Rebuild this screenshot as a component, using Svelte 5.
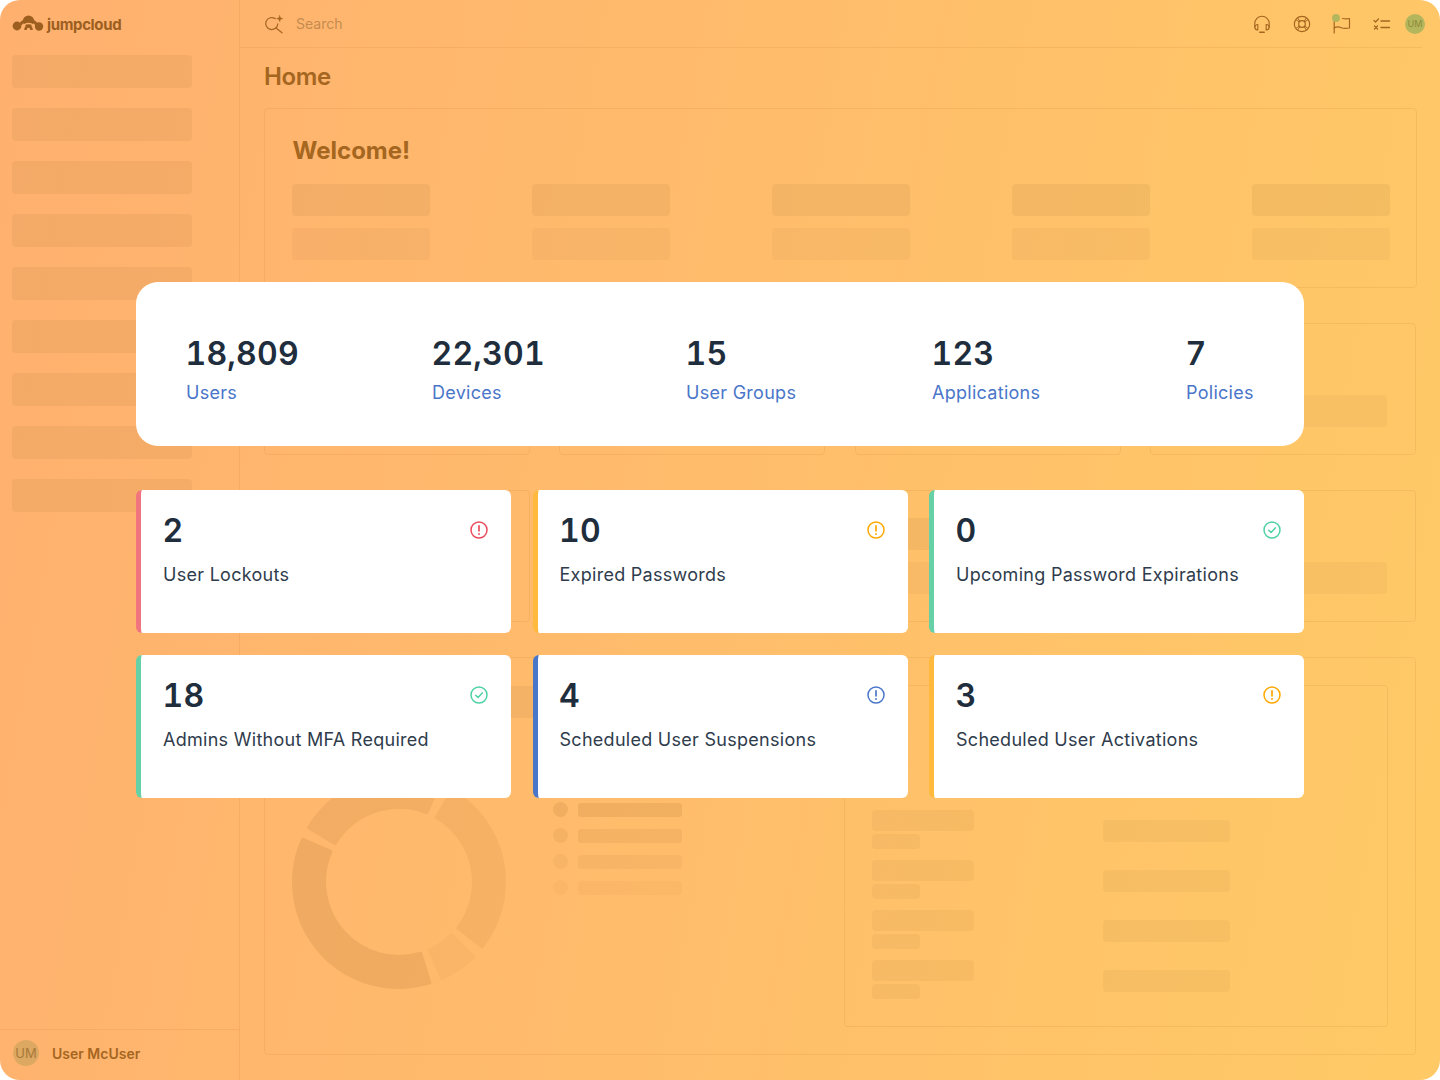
<script>
  const stats = [
    { value: "18,809", label: "Users" },
    { value: "22,301", label: "Devices" },
    { value: "15", label: "User Groups" },
    { value: "123", label: "Applications" },
    { value: "7", label: "Policies" }
  ];

  const alerts = [
    { value: 2, label: "User Lockouts", tone: "red", icon: "alert" },
    { value: 10, label: "Expired Passwords", tone: "amber", icon: "alert" },
    { value: 0, label: "Upcoming Password Expirations", tone: "green", icon: "check" },
    { value: 18, label: "Admins Without MFA Required", tone: "green", icon: "check" },
    { value: 4, label: "Scheduled User Suspensions", tone: "blue", icon: "alert" },
    { value: 3, label: "Scheduled User Activations", tone: "amber", icon: "alert" }
  ];

  const navItems = Array.from({ length: 9 });
  const welcomeCols = Array.from({ length: 5 });
  const summaryPanels = Array.from({ length: 8 });
  const legendLevels = ["l1", "l2", "l3", "l4"];
  const rows = Array.from({ length: 4 });

  const segments = [
    { from: 163, to: 294, level: "l1" },
    { from: 301, to: 382, level: "l2" },
    { from: 390, to: 488, level: "l3" },
    { from: 495, to: 516, level: "l4" }
  ];

  function point(r, deg) {
    const a = (deg * Math.PI) / 180;
    return `${(107 + r * Math.sin(a)).toFixed(2)} ${(107 - r * Math.cos(a)).toFixed(2)}`;
  }

  function arc(from, to) {
    const big = to - from > 180 ? 1 : 0;
    const outer = 105.5;
    const inner = 74.5;
    return `M${point(outer, from)}A${outer} ${outer} 0 ${big} 1 ${point(outer, to)}L${point(inner, to)}A${inner} ${inner} 0 ${big} 0 ${point(inner, from)}Z`;
  }
</script>

<div class="frame">
  <aside class="sidebar">
    <div class="logo">
      <svg width="32" height="20" viewBox="0 0 32 20" fill="none">
        <circle cx="5" cy="11" r="4.4" fill="#9c5f1f" />
        <circle cx="27" cy="11.5" r="4.2" fill="#9c5f1f" />
        <circle cx="16.5" cy="6" r="5.6" fill="#9c5f1f" />
        <path d="M8.5 9.5c1.5-3 4-4 8-4s6.5 1 8 4" stroke="#9c5f1f" stroke-width="3" />
        <path d="M10.5 15c0-4 2-6.500 6-6.500s6 2.500 6 6.500" stroke="#ffb26e" stroke-width="1.500" />
        <path d="M13.500 15c0-2.500 1-3.500 3-3.500s3 1 3 3.500" stroke="#9c5f1f" stroke-width="2.600" />
      </svg>
      <span>jumpcloud</span>
    </div>
    <nav class="nav">
      {#each navItems as _}
        <div class="bone nav-item"></div>
      {/each}
    </nav>
    <div class="user">
      <span class="avatar big">UM</span>
      <span class="user-name">User McUser</span>
    </div>
  </aside>

  <main class="main">
    <header class="topbar">
      <div class="search">
        <svg width="20" height="20" viewBox="0 0 20 20" fill="none" stroke="#a5661f" stroke-width="1.200" stroke-linecap="round">
          <path d="M10.300 4.700A6 6 0 1 0 12.800 9.800" />
          <path d="M11 14l6 4.800" />
          <path d="M14.700 1.500l.8 2.300 2.300.8-2.300.8-.8 2.300-.8-2.300-2.300-.8 2.300-.8z" fill="#a5661f" stroke-width=".4" />
        </svg>
        <span>Search</span>
      </div>
      <div class="tools">
        <svg width="20" height="20" viewBox="0 0 20 20" fill="none" stroke="#a5661f" stroke-width="1.100" stroke-linecap="round">
          <path d="M2.800 13V9.500a7.200 7.200 0 0 1 14.400 0V13" />
          <path d="M2.800 13a3 3 0 0 0 3 3V10.500a3 3 0 0 0-3 2.500zM17.200 13a3 3 0 0 1-3 3V10.500a3 3 0 0 1 3 2.500z" />
          <path d="M7.800 18.300h4.400" stroke-width="1.600" />
        </svg>
        <svg width="20" height="20" viewBox="0 0 20 20" fill="none" stroke="#a5661f" stroke-width="1.200">
          <circle cx="10" cy="10" r="7.700" />
          <circle cx="10" cy="10" r="3.300" />
          <path d="M5.500 3.800l2.500 3.700M14.500 3.800L12 7.500M3.800 14.500L7.500 12M16.200 14.500L12.500 12M3.800 5.500L7.500 8M16.200 5.500L12.500 8M5.500 16.200L8 12.500M14.500 16.200L12 12.500" stroke-width="1" />
        </svg>
        <span class="flag">
          <svg width="20" height="20" viewBox="0 0 20 20" fill="none" stroke="#a5661f" stroke-width="1.200" stroke-linecap="round" stroke-linejoin="round">
            <path d="M2.200 6v13" />
            <path d="M2.200 14c2-1.300 4.500-1.300 7-.3s5 1 8.300.3V4.500c-3 .8-5 .5-7 0" />
          </svg>
          <i class="dot"></i>
        </span>
        <svg width="20" height="20" viewBox="0 0 20 20" fill="none" stroke="#a5661f" stroke-width="1.300" stroke-linecap="round" stroke-linejoin="round">
          <path d="M2 6.500l1.500 1.500L6.500 5" />
          <path d="M2.500 12l3 3M5.500 12l-3 3" />
          <path d="M9 7h8.500M9 13.500h8.500" stroke-width="1.500" />
        </svg>
        <span class="avatar small">UM</span>
      </div>
    </header>
    <div class="rule"></div>

    <h1>Home</h1>

    <section class="panel welcome">
      <h2>Welcome!</h2>
      <div class="welcome-grid">
        {#each welcomeCols as _}
          <div class="bone wb"></div>
        {/each}
        {#each welcomeCols as _}
          <div class="bone wb faded"></div>
        {/each}
      </div>
    </section>

    <section class="summary">
      {#each summaryPanels as _}
        <div class="panel tile">
          <div class="bone tb short"></div>
          <div class="bone tb faded"></div>
        </div>
      {/each}
    </section>

    <section class="panel wide">
      <div class="chart">
        <div class="bone chart-title"></div>
        <div class="chart-row">
          <svg class="donut" width="214" height="214" viewBox="0 0 214 214">
            {#each segments as s}
              <path class="seg {s.level}" d={arc(s.from, s.to)} />
            {/each}
          </svg>
          <ul class="legend">
            {#each legendLevels as level}
              <li class={level}>
                <i></i>
                <b></b>
              </li>
            {/each}
          </ul>
        </div>
      </div>
      <div class="panel inner">
        <div class="inner-left">
          {#each rows as _}
            <div class="pair">
              <div class="bone line"></div>
              <div class="bone sub"></div>
            </div>
          {/each}
        </div>
        <div class="inner-right">
          {#each rows as _}
            <div class="bone rline"></div>
          {/each}
        </div>
      </div>
    </section>
  </main>

  <div class="overlay">
    <div class="stats">
      {#each stats as stat}
        <div class="stat">
          <div class="num">{stat.value}</div>
          <div class="stat-label">{stat.label}</div>
        </div>
      {/each}
    </div>

    <div class="alerts">
      {#each alerts as a}
        <div class="alert {a.tone}">
          <div class="alert-head">
            <div class="num">{a.value}</div>
            <svg class="ico" width="18" height="18" viewBox="0 0 18 18" fill="none" stroke="currentColor" stroke-width="1.500" stroke-linecap="round" stroke-linejoin="round">
              <circle cx="9" cy="9" r="8" />
              {#if a.icon === "check"}
                <path d="M5.700 9.300l2.300 2.200 4.300-4.600" />
              {:else}
                <path d="M9 4.800v5" stroke-width="1.700" />
                <path d="M9 13v.1" stroke-width="1.900" />
              {/if}
            </svg>
          </div>
          <div class="alert-label">{a.label}</div>
        </div>
      {/each}
    </div>
  </div>
</div>

<style>
  :global(body) {
    margin: 0;
    background: #fff;
  }

  .frame {
    position: relative;
    width: 1440px;
    height: 1080px;
    display: flex;
    overflow: hidden;
    border-radius: 20px;
    background: linear-gradient(100deg, #ffb06f 0%, #ffbd6b 50%, #ffca66 100%);
    font-family: Inter, "Liberation Sans", sans-serif;
    color: #a5661f;
  }

  .bone {
    background: rgba(170, 120, 60, 0.13);
    border-radius: 4px;
  }

  .bone.faded {
    background: rgba(170, 120, 60, 0.08);
  }

  .sidebar {
    width: 240px;
    flex: none;
    box-sizing: border-box;
    display: flex;
    flex-direction: column;
    border-right: 1px solid rgba(200, 125, 50, 0.16);
  }

  .logo {
    height: 55px;
    padding: 0 0 6px 12px;
    box-sizing: border-box;
    display: flex;
    align-items: center;
    gap: 3px;
    font-size: 15px;
    font-weight: 700;
    letter-spacing: -0.35px;
    color: #9c5f1f;
  }

  .nav {
    flex: 1;
    padding: 0 47px 0 12px;
    display: flex;
    flex-direction: column;
    gap: 20px;
  }

  .nav-item {
    height: 33px;
  }

  .user {
    height: 51px;
    box-sizing: border-box;
    padding: 0 0 4px 13px;
    display: flex;
    align-items: center;
    gap: 13px;
    border-top: 1px solid rgba(200, 125, 50, 0.16);
  }

  .user-name {
    font-size: 14px;
    font-weight: 600;
    color: #a5661f;
  }

  .avatar {
    display: flex;
    align-items: center;
    justify-content: center;
    border-radius: 50%;
    flex: none;
  }

  .avatar.big {
    width: 26px;
    height: 26px;
    background: #dda862;
    color: #a87a3a;
    font-size: 13px;
  }

  .avatar.small {
    width: 20px;
    height: 20px;
    margin-left: -7px;
    background: #b3b65c;
    color: #8f8a38;
    font-size: 9px;
  }

  .main {
    flex: 1;
    min-width: 0;
    display: flex;
    flex-direction: column;
  }

  .topbar {
    height: 47px;
    flex: none;
    padding: 0 15px 0 25px;
    display: flex;
    align-items: center;
    justify-content: space-between;
  }

  .search {
    display: flex;
    align-items: center;
    gap: 11px;
    font-size: 14px;
    color: #c58c4f;
  }

  .tools {
    display: flex;
    align-items: center;
    gap: 20px;
  }

  .flag {
    position: relative;
    display: flex;
  }

  .dot {
    position: absolute;
    left: 0;
    top: 0;
    width: 8px;
    height: 8px;
    border-radius: 50%;
    background: #b3b65c;
  }

  .rule {
    height: 1px;
    flex: none;
    margin-right: 18px;
    background: rgba(200, 125, 50, 0.16);
  }

  h1 {
    margin: 0 0 4px 24px;
    height: 56px;
    flex: none;
    display: flex;
    align-items: center;
    font-size: 24px;
    font-weight: 600;
    letter-spacing: -0.4px;
    color: #a5661f;
  }

  .panel {
    box-sizing: border-box;
    border: 1px solid rgba(200, 125, 50, 0.16);
    border-radius: 4px;
  }

  .welcome {
    margin: 0 23px 0 24px;
    height: 180px;
    flex: none;
    padding: 28px 26px 0 27px;
  }

  h2 {
    margin: 0 0 0 0.5px;
    height: 28px;
    line-height: 28px;
    font-size: 24px;
    font-weight: 700;
    color: #a5661f;
  }

  .welcome-grid {
    margin-top: 19px;
    display: grid;
    grid-template-columns: repeat(5, 138px);
    justify-content: space-between;
    gap: 12px 0;
  }

  .wb {
    height: 32px;
  }

  .summary {
    margin: 35px 24px 0 24px;
    flex: none;
    display: grid;
    grid-template-columns: repeat(4, 266px);
    justify-content: space-between;
    gap: 35px 0;
  }

  .tile {
    height: 132px;
    padding: 27px 28px;
    display: flex;
    flex-direction: column;
    gap: 12px;
  }

  .tb {
    height: 32px;
    width: 208px;
  }

  .tb.short {
    width: 104px;
  }

  .wide {
    margin: 35px 24px 25px 24px;
    flex: 1;
    padding: 27px;
    display: flex;
    justify-content: space-between;
  }

  .chart-title {
    width: 268px;
    height: 32px;
    margin-top: 1px;
  }

  .chart-row {
    margin-top: 57px;
    display: flex;
    align-items: flex-start;
    gap: 47px;
  }

  .donut {
    display: block;
  }

  .seg {
    fill: #b87838;
    stroke: #b87838;
    stroke-width: 3;
    stroke-linejoin: round;
  }

  .seg.l1 { opacity: 0.2; }
  .seg.l2 { opacity: 0.16; }
  .seg.l3 { opacity: 0.12; }
  .seg.l4 { opacity: 0.06; }

  .legend {
    margin: 27px 0 0;
    padding: 0;
    list-style: none;
    display: flex;
    flex-direction: column;
    gap: 11px;
  }

  .legend li {
    display: flex;
    align-items: center;
    gap: 10px;
  }

  .legend i {
    width: 15px;
    height: 15px;
    border-radius: 50%;
    background: #b87838;
  }

  .legend b {
    width: 104px;
    height: 14px;
    border-radius: 3px;
    background: #b87838;
  }

  .legend .l1 i, .legend .l1 b { opacity: 0.2; }
  .legend .l2 i, .legend .l2 b { opacity: 0.14; }
  .legend .l3 i, .legend .l3 b { opacity: 0.1; }
  .legend .l4 i, .legend .l4 b { opacity: 0.06; }

  .inner {
    width: 544px;
    flex: none;
    padding-left: 27px;
    display: flex;
  }

  .inner-left {
    width: 231px;
    padding-top: 124px;
    display: flex;
    flex-direction: column;
    gap: 11px;
  }

  .line {
    width: 102px;
    height: 21px;
  }

  .sub {
    width: 48px;
    height: 15px;
    margin-top: 3px;
  }

  .inner-right {
    padding-top: 134px;
    display: flex;
    flex-direction: column;
    gap: 28px;
  }

  .rline {
    width: 127px;
    height: 22px;
  }

  .line, .sub, .rline {
    background: rgba(170, 120, 60, 0.09);
  }

  /* the white cards float over the skeleton page */
  .overlay {
    position: absolute;
    left: 136px;
    top: 282px;
    width: 1168px;
    display: flex;
    flex-direction: column;
    gap: 44px;
  }

  .stats {
    height: 164px;
    box-sizing: border-box;
    padding: 53px 0 0 50px;
    display: grid;
    grid-template-columns: 246px 254px 246px 254px auto;
    background: #fff;
    border-radius: 22px;
  }

  .num {
    font-size: 32px;
    line-height: 38px;
    font-weight: 600;
    font-variant-numeric: tabular-nums;
    letter-spacing: 0.2px;
    margin-left: -0.5px;
    color: #202d3c;
  }

  .stat-label {
    margin-top: 8px;
    font-size: 18px;
    line-height: 24px;
    letter-spacing: 0.28px;
    color: #4a76c9;
  }

  .alerts {
    display: grid;
    grid-template-columns: repeat(3, 375px);
    justify-content: space-between;
    gap: 22px 0;
  }

  .alert {
    height: 143px;
    box-sizing: border-box;
    padding: 22px 23px 0 22px;
    background: #fff;
    border-radius: 6px;
    border-left: 5px solid;
  }

  .alert-head {
    display: flex;
    align-items: center;
    justify-content: space-between;
  }

  .ico {
    margin-bottom: 2px;
  }

  .alert-label {
    margin-top: 13px;
    font-size: 18px;
    line-height: 24px;
    letter-spacing: 0.28px;
    color: #2f3c4c;
  }

  .alert.red { border-left-color: #f0757f; }
  .alert.amber { border-left-color: #ffb93c; }
  .alert.green { border-left-color: #66d1a6; }
  .alert.blue { border-left-color: #4a76c9; }

  .alert.red .ico { color: #e94b5c; }
  .alert.amber .ico { color: #ffa800; }
  .alert.green .ico { color: #4fd1a5; }
  .alert.blue .ico { color: #4a76c9; }
</style>
